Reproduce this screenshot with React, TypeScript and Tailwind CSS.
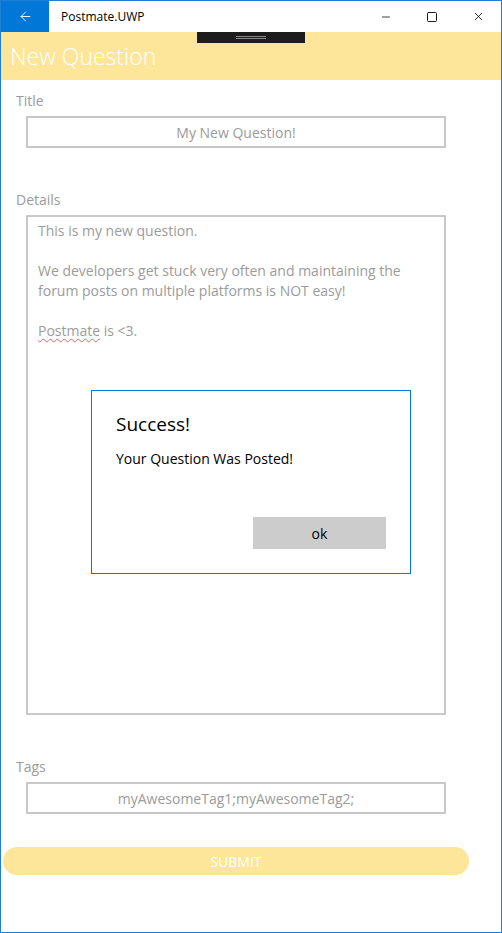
import { ArrowLeft, Minus, Square, X } from "lucide-react";

export default function App() {
  const font = { fontFamily: '"Open Sans", "Noto Sans", sans-serif' };

  return (
    <div
      className="relative w-[502px] h-[933px] border border-[#1f7fd6] bg-white flex flex-col overflow-hidden"
      style={font}
    >
      {/* Title bar */}
      <div className="flex items-center h-[31px] shrink-0 bg-white">
        <div className="w-[48px] h-full bg-[#0078d7] flex items-center justify-center">
          <ArrowLeft className="w-[15px] h-[15px] text-white" strokeWidth={1.5} />
        </div>
        <span className="ml-[12px] text-[12px] text-black">Postmate.UWP</span>
        <div className="ml-auto flex h-full">
          <div className="w-[46px] flex items-center justify-center">
            <Minus className="w-[12px] h-[12px] text-black" strokeWidth={1.5} />
          </div>
          <div className="w-[46px] flex items-center justify-center">
            <Square className="w-[12px] h-[12px] text-black" strokeWidth={1.8} />
          </div>
          <div className="w-[46px] flex items-center justify-center">
            <X className="w-[13px] h-[13px] text-black" strokeWidth={1.5} />
          </div>
        </div>
      </div>

      {/* Header */}
      <div className="relative h-[48px] shrink-0 bg-[#fde699] flex items-center">
        <div className="absolute left-[196px] top-0 w-[108px] h-[11px] bg-[#1c1c1c] flex flex-col items-center justify-center gap-[1px]">
          <div className="w-[30px] h-px bg-[#8a8a8a]" />
          <div className="w-[30px] h-px bg-[#8a8a8a]" />
        </div>
        <h1 className="ml-[9px] text-[23px] font-light text-white leading-none">New Question</h1>
      </div>

      {/* Form */}
      <div className="flex flex-col">
        <label className="ml-[15px] mt-[11px] text-[14px] leading-[20px] text-[#9b9b9b]">Title</label>
        <div className="ml-[25px] mt-[5px] w-[420px] h-[32px] border-2 border-[#c8c8c8] flex items-center justify-center text-[14px] text-[#9b9b9b]">
          My New Question!
        </div>

        <label className="ml-[15px] mt-[42px] text-[14px] leading-[20px] text-[#9b9b9b]">Details</label>
        <div className="ml-[25px] mt-[5px] w-[420px] h-[500px] border-2 border-[#c8c8c8] pl-[10px] pt-[4px] pr-[10px] text-[14px] leading-[20px] text-[#9b9b9b]">
          <p>This is my new question.</p>
          <p className="mt-[20px]">
            We developers get stuck very often and maintaining the forum posts on multiple platforms is NOT easy!
          </p>
          <p className="mt-[20px]">
            <span className="underline decoration-wavy decoration-[#e06666] decoration-1 underline-offset-2">Postmate</span> is &lt;3.
          </p>
        </div>

        <label className="ml-[15px] mt-[42px] text-[14px] leading-[20px] text-[#9b9b9b]">Tags</label>
        <div className="ml-[25px] mt-[5px] w-[420px] h-[32px] border-2 border-[#c8c8c8] flex items-center justify-center text-[14px] text-[#9b9b9b]">
          myAwesomeTag1;myAwesomeTag2;
        </div>

        <button className="ml-[2px] mt-[33px] w-[466px] h-[28px] rounded-full bg-[#fde699] text-white text-[14px] flex items-center justify-center">
          SUBMIT
        </button>
      </div>

      {/* Dialog */}
      <div className="absolute left-[90px] top-[389px] w-[320px] h-[184px] border border-[#0078d7] bg-white flex flex-col">
        <h2 className="ml-[24px] mt-[19px] text-[19px] leading-[28px] text-black">Success!</h2>
        <p className="ml-[24px] mt-[11px] text-[14px] leading-[20px] text-black">Your Question Was Posted!</p>
        <div className="mt-auto mb-[24px] mr-[24px] flex justify-end">
          <button className="w-[133px] h-[32px] bg-[#cccccc] text-[14px] text-black flex items-center justify-center">
            ok
          </button>
        </div>
      </div>
    </div>
  );
}
